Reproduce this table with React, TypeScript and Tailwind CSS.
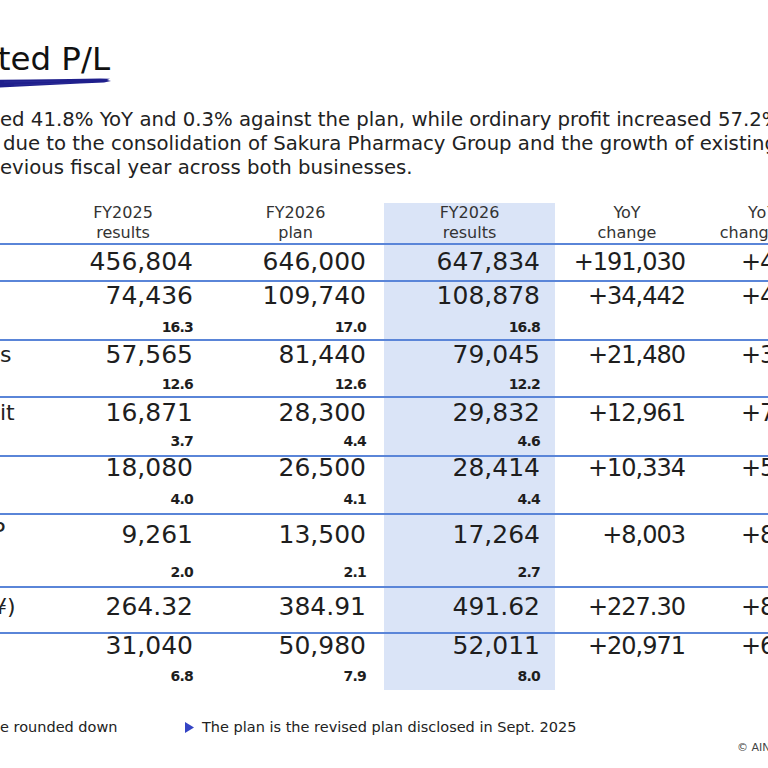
import React from "react";

type Row = {
  label: React.ReactNode;
  v: string[];
  subs: string[] | null;
  h: string;
  mt: string;
  smt: string;
};

const rows: Row[] = [
  { label: null, v: ["456,804", "646,000", "647,834", "+191,030", "+41.8%"], subs: null, h: "h-[37px]", mt: "mt-[3px]", smt: "" },
  { label: null, v: ["74,436", "109,740", "108,878", "+34,442", "+46.3%"], subs: ["16.3", "17.0", "16.8"], h: "h-[59px]", mt: "mt-[0px]", smt: "mt-[8px]" },
  { label: <span>s</span>, v: ["57,565", "81,440", "79,045", "+21,480", "+37.3%"], subs: ["12.6", "12.6", "12.2"], h: "h-[57px]", mt: "mt-[0px]", smt: "mt-[6px]" },
  { label: <span>it</span>, v: ["16,871", "28,300", "29,832", "+12,961", "+76.8%"], subs: ["3.7", "4.4", "4.6"], h: "h-[59px]", mt: "mt-[1px]", smt: "mt-[5px]" },
  { label: null, v: ["18,080", "26,500", "28,414", "+10,334", "+57.2%"], subs: ["4.0", "4.1", "4.4"], h: "h-[58px]", mt: "-mt-[3px]", smt: "mt-[8px]" },
  { label: <span className="-ml-[8px] -mt-[4px] block">P</span>, v: ["9,261", "13,500", "17,264", "+8,003", "+86.4%"], subs: ["2.0", "2.1", "2.7"], h: "h-[73px]", mt: "mt-[6px]", smt: "mt-[14px]" },
  { label: <span className="-ml-[7px] block">¥)</span>, v: ["264.32", "384.91", "491.62", "+227.30", "+86.0%"], subs: null, h: "h-[46px]", mt: "mt-[5px]", smt: "" },
  { label: null, v: ["31,040", "50,980", "52,011", "+20,971", "+67.6%"], subs: ["6.8", "7.9", "8.0"], h: "h-[58px]", mt: "-mt-[2px]", smt: "mt-[7px]" },
];

function Main({ text, mt, yoy }: { text: string; mt: string; yoy?: boolean }) {
  return (
    <div
      className={`${mt} h-[28px] leading-[28px] whitespace-nowrap ${
        yoy ? "text-[24px] tracking-[-1px]" : "text-[25px]"
      } text-[#1e1e1e]`}
    >
      {text}
    </div>
  );
}

function Sub({ text, mt }: { text: string; mt: string }) {
  return (
    <div className={`${mt} h-[18px] leading-[18px] text-[14px] font-bold text-[#1e1e1e] tracking-[-0.8px]`}>
      {text}
    </div>
  );
}

export default function App() {
  return (
    <div className="w-[768px] h-[768px] overflow-hidden bg-white relative font-['DejaVu_Sans',sans-serif] text-[#222]">
      {/* Title */}
      <div className="pt-[40px]">
        <div className="w-[110px] flex justify-end">
          <div className="whitespace-nowrap text-[32.5px] leading-[38px] text-[#111]">Consolidated P/L</div>
        </div>
        <svg width="112" height="12" viewBox="0 0 112 12" className="block">
          <path
            d="M0 1.8 L30 1.6 L70 1 L100 0.4 L110 0.8 L107 2 L111 3 L104 4.6 L80 5.6 L50 7 L20 8.6 L0 9.4 Z"
            fill="#1f1f8c"
          />
          <path d="M4 4 L60 3 M14 7 L70 5" stroke="#4a4ab0" strokeWidth="0.5" opacity="0.5" />
        </svg>
      </div>

      {/* Paragraph */}
      <div className="mt-[18px] text-[19.7px] leading-[24px] text-[#222] whitespace-nowrap">
        <div>ed 41.8% YoY and 0.3% against the plan, while ordinary profit increased 57.2% YoY and 7.2% against the plan,</div>
        <div className="ml-[3px]">due to the consolidation of Sakura Pharmacy Group and the growth of existing stores, both compared</div>
        <div>evious fiscal year across both businesses.</div>
      </div>

      {/* Table */}
      <div className="mt-[23px] w-[905px]">
        {/* Header */}
        <div className="flex h-[40px] text-[16px] leading-[20px] text-[#333]">
          <div className="w-[40px]" />
          <div className="w-[160px] pl-[6px] text-center">
            <div>FY2025</div>
            <div>results</div>
          </div>
          <div className="w-[184px] pl-[7px] text-center">
            <div>FY2026</div>
            <div>plan</div>
          </div>
          <div className="w-[171px] bg-[#dae4f7] text-center">
            <div>FY2026</div>
            <div>results</div>
          </div>
          <div className="w-[150px] pr-[6px] text-center">
            <div>YoY</div>
            <div>change</div>
          </div>
          <div className="w-[200px]">
            <div className="ml-[2px] w-[112px] text-center whitespace-nowrap">
              <div className="tracking-[1px]">YoY</div>
              <div>change(%)</div>
            </div>
          </div>
        </div>

        {rows.map((r, i) => (
          <div key={i} className={`flex ${r.h} border-t-2 border-[#5a85d8]`}>
            <div className="w-[40px] overflow-hidden">
              <div className={`${r.mt} h-[28px] leading-[28px] text-[22px] text-[#222] whitespace-nowrap`}>
                {r.label}
              </div>
            </div>
            <div className="w-[160px] pr-[7px] flex flex-col items-end">
              <Main text={r.v[0]} mt={r.mt} />
              {r.subs && <Sub text={r.subs[0]} mt={r.smt} />}
            </div>
            <div className="w-[184px] pr-[18px] flex flex-col items-end">
              <Main text={r.v[1]} mt={r.mt} />
              {r.subs && <Sub text={r.subs[1]} mt={r.smt} />}
            </div>
            <div className="w-[171px] pr-[15px] flex flex-col items-end bg-[#dae4f7]">
              <Main text={r.v[2]} mt={r.mt} />
              {r.subs && <Sub text={r.subs[2]} mt={r.smt} />}
            </div>
            <div className="w-[150px] pr-[20px] flex flex-col items-end">
              <Main text={r.v[3]} mt={r.mt} yoy />
            </div>
            <div className="w-[200px] pl-[36px] flex flex-col items-start">
              <Main text={r.v[4]} mt={r.mt} yoy />
            </div>
          </div>
        ))}
      </div>

      {/* Footnotes */}
      <div className="mt-[27px] flex h-[20px] text-[14.5px] leading-[20px] text-[#222] whitespace-nowrap">
        <div className="w-[185px]">e rounded down</div>
        <div className="flex items-center gap-[8px]">
          <svg width="9" height="11" viewBox="0 0 9 11">
            <path d="M0 0 L9 5.5 L0 11 Z" fill="#3444c4" />
          </svg>
          <span>The plan is the revised plan disclosed in Sept. 2025</span>
        </div>
      </div>
      <div className="mt-[4px] pl-[737px] h-[14px] text-[11px] leading-[14px] text-[#444] whitespace-nowrap">
        © AIN HOLDINGS INC. All Rights Reserved.
      </div>
    </div>
  );
}
